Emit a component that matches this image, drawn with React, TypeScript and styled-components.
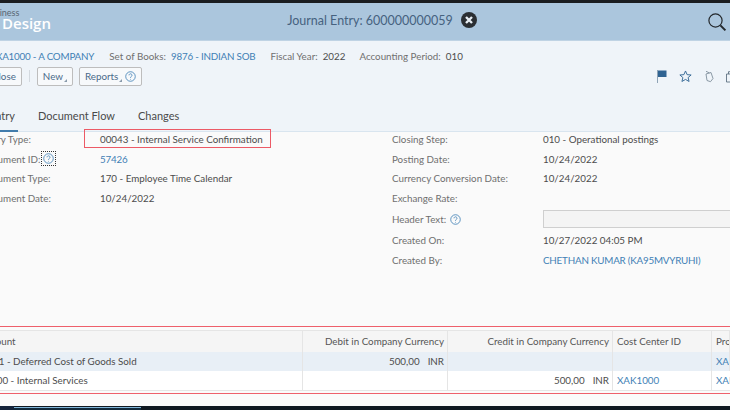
import React from 'react';
import styled, { createGlobalStyle } from 'styled-components';

const GlobalStyle = createGlobalStyle`
  html, body {
    margin: 0;
    padding: 0;
    width: 730px;
    height: 410px;
    overflow: hidden;
    background: #fafafa;
    font-family: Lato, "Open Sans", "Liberation Sans", sans-serif;
  }
`;

const Page = styled.div`
  width: 730px;
  height: 410px;
  overflow: hidden;
  display: flex;
  flex-direction: column;
`;

const TopEdge = styled.div`
  height: 3px;
  background: #1a1d20;
  flex: none;
`;

const ShellBar = styled.header`
  height: 38px;
  flex: none;
  box-sizing: border-box;
  background: #abc6dd;
  border-bottom: 1px solid #bfd3e4;
  display: grid;
  grid-template-columns: 1fr auto 1fr;
  align-items: center;
`;

const Logo = styled.div`
  height: 37px;
  overflow: hidden;
`;

const LogoSmall = styled.div`
  font-size: 9px;
  line-height: 9px;
  color: #5a6672;
  padding-top: 5px;
  margin-left: -15px;
  white-space: nowrap;
`;

const LogoBig = styled.div`
  font-family: "Open Sans", sans-serif;
  font-size: 15px;
  line-height: 12px;
  font-weight: 600;
  color: #fff;
  white-space: nowrap;
  margin: 0 0 0 2px;
`;

const ShellTitle = styled.div`
  display: flex;
  align-items: center;
  gap: 8px;
  font-size: 12.5px;
  color: #46627f;
  margin-left: 34px;
  margin-top: -3px;
`;

const ShellRight = styled.div`
  display: flex;
  justify-content: flex-end;
  padding-right: 3px;
`;

const Header = styled.section`
  height: 91px;
  flex: none;
  box-sizing: border-box;
  background: #eff4f9;
  border-bottom: 1px solid #d9e5ef;
  display: flex;
  flex-direction: column;
`;

const InfoRow = styled.div`
  display: flex;
  align-items: center;
  height: 14px;
  margin-top: 9px;
  margin-left: -4px;
  font-size: 9.8px;
  white-space: nowrap;
`;

const InfoLabel = styled.span`
  color: #6f6f6f;
  margin-right: 5px;
`;

const InfoValue = styled.span<{ $link?: boolean; $gap: number }>`
  color: ${p => (p.$link ? '#3f7fb5' : '#4c4c4c')};
  letter-spacing: ${p => (p.$link ? '-0.2px' : '0')};
  margin-right: ${p => p.$gap}px;
`;

const ActionRow = styled.div`
  display: flex;
  align-items: center;
  margin-top: 4px;
  height: 19px;
`;

const Action = styled.button<{ $left: number }>`
  height: 19px;
  box-sizing: border-box;
  padding: 0 5px;
  margin: 0 0 0 ${p => p.$left}px;
  background: #f7f9fb;
  border: 1px solid #bdbdbd;
  border-radius: 2px;
  color: #4a6a8a;
  font: 9.8px Lato, "Open Sans", sans-serif;
  display: flex;
  align-items: center;
  gap: 3px;
  white-space: nowrap;
`;

const Caret = styled.i`
  width: 0;
  height: 0;
  border-left: 3px solid transparent;
  border-bottom: 3px solid #8a9bac;
  align-self: flex-end;
  margin: 0 0 3px -2px;
`;

const Separator = styled.span`
  width: 1px;
  height: 12px;
  background: #d3d9df;
  margin: 0 0 0 7px;
  flex: none;
`;

const ToolIcons = styled.div`
  margin-left: auto;
  margin-right: -4px;
  display: flex;
  align-items: center;
  gap: 12px;
`;

const Tabs = styled.nav`
  display: flex;
  gap: 23px;
  margin-top: 22px;
  margin-left: -11px;
  font-size: 11px;
  color: #4a4a4a;
  height: 25px;
`;

const Tab = styled.span<{ $active?: boolean }>`
  position: relative;
  line-height: 16px;
  white-space: nowrap;
  ${p =>
    p.$active
      ? `&::after {
    content: '';
    position: absolute;
    left: 0;
    right: -3px;
    top: 22px;
    height: 2px;
    background: #427cac;
  }`
      : ''}
`;

const Body = styled.main`
  height: 195px;
  flex: none;
  box-sizing: border-box;
  background: #fafafa;
  border-bottom: 1px solid #ee5f6b;
  display: grid;
  grid-template-columns: 392px 338px;
`;

const FormColumn = styled.div`
  display: flex;
  flex-direction: column;
  gap: 4.6px;
  margin-top: -0.5px;
`;

const FormRow = styled.div<{ $labelWidth: number; $height?: number }>`
  display: grid;
  grid-template-columns: ${p => p.$labelWidth}px 1fr;
  height: ${p => p.$height ?? 15}px;
  align-items: center;
  font-size: 9.8px;
  white-space: nowrap;
`;

const Label = styled.div<{ $clip?: number }>`
  color: #6f6f6f;
  display: flex;
  align-items: center;
  gap: 1px;
  margin-left: ${p => (p.$clip ? -p.$clip : 0)}px;
`;

const Value = styled.div<{ $link?: boolean }>`
  color: ${p => (p.$link ? '#3f7fb5' : '#4c4c4c')};
  letter-spacing: ${p => (p.$link ? '-0.2px' : '0')};
  position: relative;
  line-height: 14px;
`;

const Highlight = styled.div`
  position: absolute;
  left: -16px;
  top: -3px;
  width: 187px;
  height: 19px;
  box-sizing: border-box;
  border: 1px solid #ec5a66;
  pointer-events: none;
`;

const HeaderInput = styled.div`
  height: 18px;
  width: 200px;
  box-sizing: border-box;
  background: #f4f4f4;
  border: 1px solid #cfcfcf;
`;

const Focus = styled.span`
  display: inline-flex;
  border: 1px dotted #333;
  padding: 1px;
`;

const TableWrap = styled.section`
  flex: none;
  height: 67px;
  box-sizing: border-box;
  padding-top: 3px;
  border-bottom: 1px solid #ee5f6b;
  background: #fafafa;
`;

const Table = styled.div`
  display: grid;
  grid-template-columns: 303px 145px 165px 99px 18px;
  font-size: 9.8px;
  color: #4c4c4c;
  border-top: 1px solid #e5e5e5;
  border-bottom: 1px solid #e5e5e5;
`;

const Cell = styled.div<{ $kind: 'head' | 'odd' | 'even'; $right?: boolean; $link?: boolean }>`
  height: ${p => (p.$kind === 'head' ? 21 : 19)}px;
  box-sizing: border-box;
  display: flex;
  align-items: center;
  justify-content: ${p => (p.$right ? 'flex-end' : 'flex-start')};
  padding: 0 3px 1px ${p => (p.$right ? 3 : 4)}px;
  border-right: 1px solid #e5e5e5;
  white-space: nowrap;
  overflow: hidden;
  background: ${p => (p.$kind === 'head' ? '#f5f5f5' : p.$kind === 'odd' ? '#e8eff6' : '#fff')};
  color: ${p => (p.$link ? '#3f7fb5' : p.$kind === 'head' ? '#555' : '#4c4c4c')};
  &:last-child { border-right: 0; }
`;

const Clipped = styled.span<{ $by: number }>`
  margin-left: ${p => -p.$by}px;
`;

const Amount = styled.span`
  display: inline-flex;
  gap: 8px;
`;

const BottomStrip = styled.div`
  height: 12px;
  flex: none;
  background: #fafafa;
`;

const Taskbar = styled.footer`
  flex: 1;
  background: #0f1720;
  display: flex;
`;

const TaskStart = styled.span`
  width: 14px;
  background: #14233a;
`;

const TaskItem = styled.span`
  width: 127px;
  margin-top: 1px;
  background: #10283a;
  border-top: 1px solid #7fb4d8;
`;

const Help = ({ size = 11 }: { size?: number }) => (
  <svg width={size} height={size} viewBox="0 0 12 12" fill="none" stroke="#3f7fb5" strokeWidth="0.9">
    <circle cx="6" cy="6" r="5.2" />
    <path d="M4.4 4.7a1.6 1.6 0 1 1 2.5 1.3c-.6.4-.9.7-.9 1.4" />
    <circle cx="6" cy="9" r=".5" fill="#3f7fb5" stroke="none" />
  </svg>
);

const CloseIcon = () => (
  <svg width="16" height="16" viewBox="0 0 16 16">
    <circle cx="8" cy="8" r="8" fill="#2b2f33" />
    <path d="M5 5l6 6M11 5l-6 6" stroke="#e8eef4" strokeWidth="2.4" />
  </svg>
);

const SearchIcon = () => (
  <svg width="20" height="20" viewBox="0 0 20 20" fill="none" stroke="#23282c">
    <circle cx="8.5" cy="8.5" r="6.6" strokeWidth="1.2" />
    <path d="M13.4 13.4l5 5" strokeWidth="2" />
  </svg>
);

const FlagIcon = () => (
  <svg width="10" height="13" viewBox="0 0 10 13">
    <path d="M.5 0v13" stroke="#8ea3b6" strokeWidth="1" />
    <path d="M1 .5h8.5v6.5H1z" fill="#2f6392" />
  </svg>
);

const StarIcon = () => (
  <svg width="13" height="13" viewBox="0 0 12 12" fill="none" stroke="#3a6c98" strokeWidth=".9">
    <path d="M6 .9l1.5 3.4 3.7.3-2.8 2.4.9 3.6L6 8.7l-3.3 1.9.9-3.6L.8 4.6l3.7-.3z" />
  </svg>
);

const TagIcon = () => (
  <svg width="10" height="13" viewBox="0 0 10 12" fill="none" stroke="#7f8e9c" strokeWidth=".9">
    <path d="M2 3.5l5-1.5 2 6-2.5 3.2-3.5-1.2z" />
    <path d="M2 .8l3.4 1.6" />
  </svg>
);

const ClipIcon = () => (
  <svg width="8" height="13" viewBox="0 0 8 12" fill="none" stroke="#5f7282" strokeWidth=".9">
    <path d="M.5 3.5h7.5v8H.5z" />
    <path d="M2.5 3.5V1.2h5.5" />
  </svg>
);

const App = () => (
  <Page>
    <GlobalStyle />
    <TopEdge />
    <ShellBar>
      <Logo>
        <LogoSmall>Business</LogoSmall>
        <LogoBig>Design</LogoBig>
      </Logo>
      <ShellTitle>
        Journal Entry: 600000000059
        <CloseIcon />
      </ShellTitle>
      <ShellRight>
        <SearchIcon />
      </ShellRight>
    </ShellBar>

    <Header>
      <InfoRow>
        <InfoValue $link $gap={15}>XA1000 - A COMPANY</InfoValue>
        <InfoLabel>Set of Books:</InfoLabel>
        <InfoValue $link $gap={15}>9876 - INDIAN SOB</InfoValue>
        <InfoLabel>Fiscal Year:</InfoLabel>
        <InfoValue $gap={14}>2022</InfoValue>
        <InfoLabel>Accounting Period:</InfoLabel>
        <InfoValue $gap={0}>010</InfoValue>
      </InfoRow>
      <ActionRow>
        <Action $left={-14}>Close</Action>
        <Separator />
        <Action $left={7}>New<Caret /></Action>
        <Action $left={6}>Reports<Caret /><Help /></Action>
        <ToolIcons>
          <FlagIcon />
          <StarIcon />
          <TagIcon />
          <ClipIcon />
        </ToolIcons>
      </ActionRow>
      <Tabs>
        <Tab $active>Entry</Tab>
        <Tab>Document Flow</Tab>
        <Tab>Changes</Tab>
      </Tabs>
    </Header>

    <Body>
      <FormColumn>
        <FormRow $labelWidth={100}>
          <Label $clip={51}>Journal Entry Type:</Label>
          <Value>00043 - Internal Service Confirmation<Highlight /></Value>
        </FormRow>
        <FormRow $labelWidth={100}>
          <Label $clip={20}>Document ID:<Focus><Help /></Focus></Label>
          <Value $link>57426</Value>
        </FormRow>
        <FormRow $labelWidth={100}>
          <Label $clip={20}>Document Type:</Label>
          <Value>170 - Employee Time Calendar</Value>
        </FormRow>
        <FormRow $labelWidth={100}>
          <Label $clip={20}>Document Date:</Label>
          <Value>10/24/2022</Value>
        </FormRow>
      </FormColumn>
      <FormColumn>
        <FormRow $labelWidth={151}><Label>Closing Step:</Label><Value>010 - Operational postings</Value></FormRow>
        <FormRow $labelWidth={151}><Label>Posting Date:</Label><Value>10/24/2022</Value></FormRow>
        <FormRow $labelWidth={151}><Label>Currency Conversion Date:</Label><Value>10/24/2022</Value></FormRow>
        <FormRow $labelWidth={151}><Label>Exchange Rate:</Label><Value /></FormRow>
        <FormRow $labelWidth={151} $height={18.4}><Label>Header Text:&nbsp;<Help /></Label><HeaderInput /></FormRow>
        <FormRow $labelWidth={151}><Label>Created On:</Label><Value>10/27/2022 04:05 PM</Value></FormRow>
        <FormRow $labelWidth={151}><Label>Created By:</Label><Value $link>CHETHAN KUMAR (KA95MVYRUHI)</Value></FormRow>
      </FormColumn>
    </Body>

    <TableWrap>
      <Table>
        <Cell $kind="head"><Clipped $by={24}>Account</Clipped></Cell>
        <Cell $kind="head" $right>Debit in Company Currency</Cell>
        <Cell $kind="head" $right>Credit in Company Currency</Cell>
        <Cell $kind="head">Cost Center ID</Cell>
        <Cell $kind="head">Profit</Cell>

        <Cell $kind="odd"><Clipped $by={28}>12101 - Deferred Cost of Goods Sold</Clipped></Cell>
        <Cell $kind="odd" $right><Amount>500,00<span>INR</span></Amount></Cell>
        <Cell $kind="odd" />
        <Cell $kind="odd" />
        <Cell $kind="odd" $link>XAK1000</Cell>

        <Cell $kind="even"><Clipped $by={30}>410000 - Internal Services</Clipped></Cell>
        <Cell $kind="even" />
        <Cell $kind="even" $right><Amount>500,00<span>INR</span></Amount></Cell>
        <Cell $kind="even" $link>XAK1000</Cell>
        <Cell $kind="even" $link>XAK1000</Cell>
      </Table>
    </TableWrap>

    <BottomStrip />
    <Taskbar>
      <TaskStart />
      <TaskItem />
    </Taskbar>
  </Page>
);

export default App;
